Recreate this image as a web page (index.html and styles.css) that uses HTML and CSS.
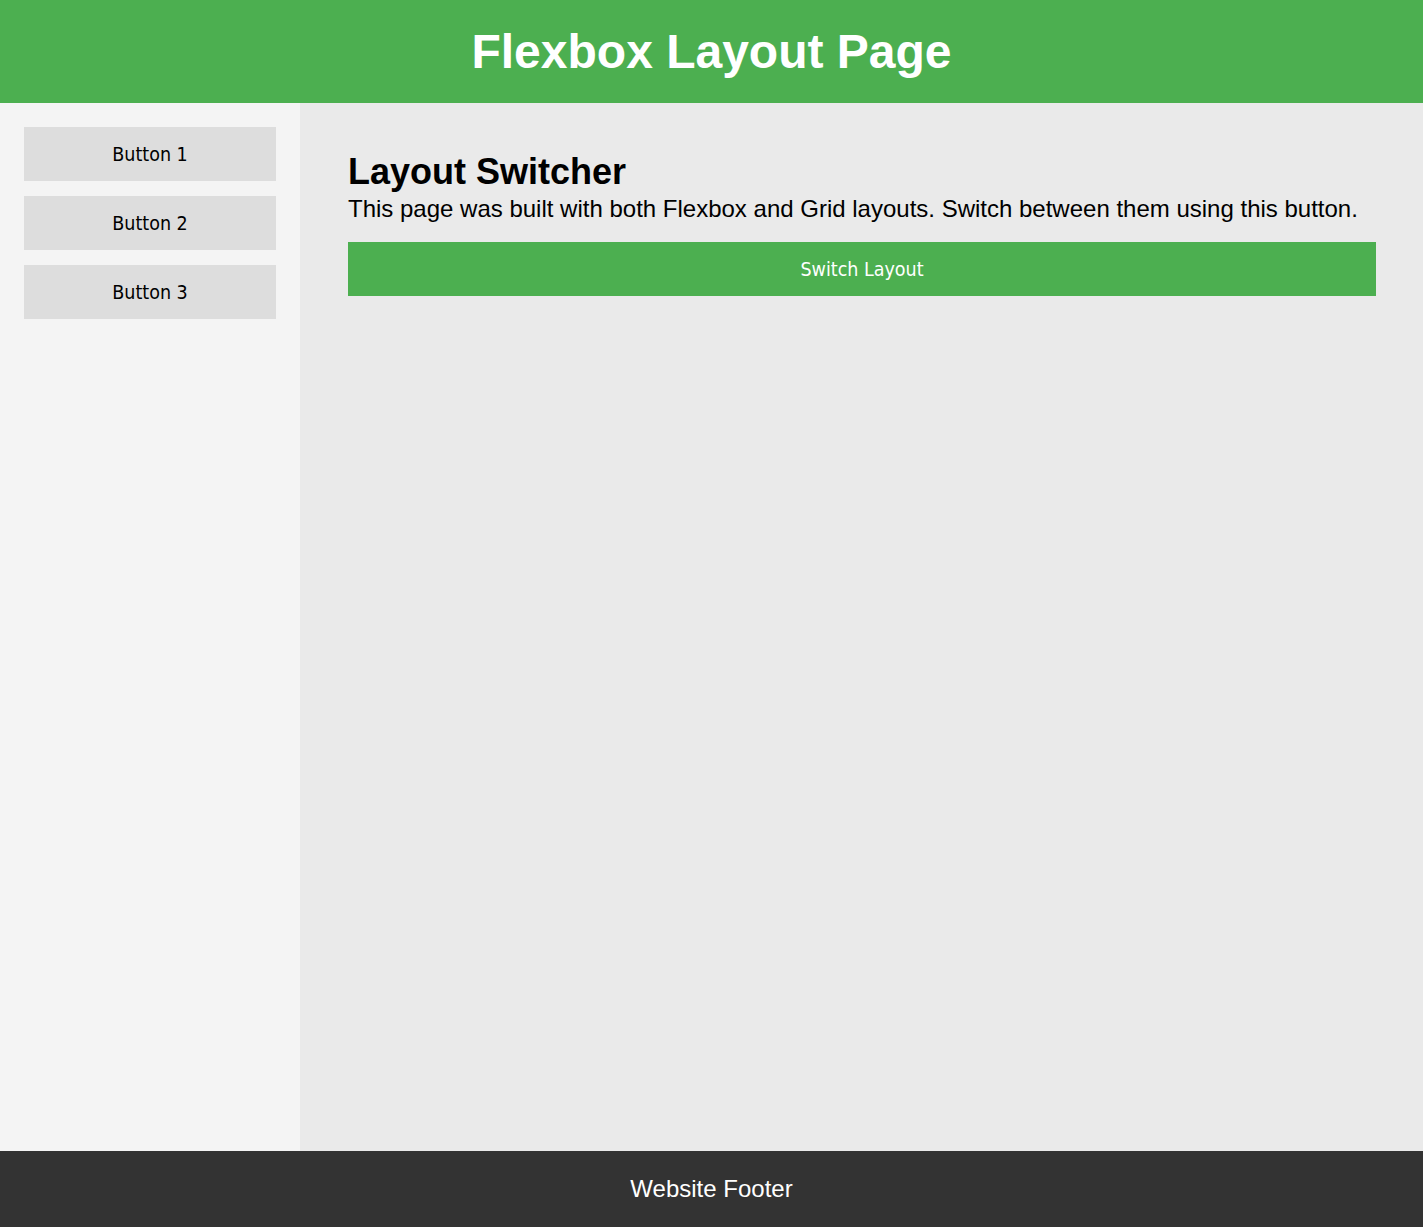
FILE: index.html
```html
<!DOCTYPE html>
<html lang="en">
<head>
<meta charset="utf-8">
<title>Flexbox Layout Page</title>
<link rel="stylesheet" href="styles.css">
</head>
<body>
<header class="site-header">
  <h1 class="site-title">Flexbox Layout Page</h1>
</header>
<div class="layout">
  <aside class="sidebar">
    <button class="side-btn">Button 1</button>
    <button class="side-btn">Button 2</button>
    <button class="side-btn">Button 3</button>
  </aside>
  <main class="content">
    <h2 class="content-title">Layout Switcher</h2>
    <p class="content-text">This page was built with both Flexbox and Grid layouts. Switch between them using this button.</p>
    <button class="switch-btn">Switch Layout</button>
  </main>
</div>
<footer class="site-footer">Website Footer</footer>
</body>
</html>
```
FILE: styles.css
```css
html, body {
  margin: 0;
  padding: 0;
}
body {
  font-family: "Liberation Sans", Arial, sans-serif;
  min-height: 100vh;
  display: flex;
  flex-direction: column;
  color: #000;
}
.site-header {
  background: #4caf50;
  padding: 24px 0;
  text-align: center;
}
.site-title {
  margin: 0;
  color: #fff;
  font-size: 48px;
  font-weight: bold;
  line-height: 55px;
}
.layout {
  flex: 1;
  display: flex;
}
.sidebar {
  width: 300px;
  box-sizing: border-box;
  background: #f4f4f4;
  padding: 24px;
  display: flex;
  flex-direction: column;
  gap: 15px;
}
.side-btn, .switch-btn {
  font-family: "DejaVu Sans Condensed", "DejaVu Sans", sans-serif;
  font-stretch: condensed;
  font-size: 19.5px;
  height: 54px;
  border: none;
  padding: 0;
  cursor: pointer;
  text-align: center;
}
.side-btn {
  background: #dddddd;
  color: #000;
  width: 100%;
}
.content {
  flex: 1;
  background: #eaeaea;
  padding: 48px 47px 48px 48px;
}
.content-title {
  margin: 0 0 3px;
  font-size: 36px;
  font-weight: bold;
  line-height: 41px;
}
.content-text {
  margin: 0 0 19px;
  font-size: 24px;
  line-height: 28px;
}
.switch-btn {
  display: block;
  width: 100%;
  background: #4caf50;
  color: #fff;
}
.site-footer {
  background: #333333;
  color: #fff;
  text-align: center;
  font-size: 24px;
  line-height: 28px;
  padding: 24px 0;
}
```
